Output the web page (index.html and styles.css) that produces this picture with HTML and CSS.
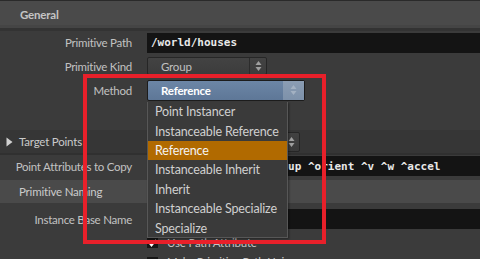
FILE: index.html
```html
<!DOCTYPE html>
<html>
<head>
<meta charset="utf-8">
<link rel="stylesheet" href="styles.css">
</head>
<body>
<div class="page">
  <div class="topline"></div>
  <div class="section general">General</div>
  <div class="section-sep"></div>

  <div class="row r-path">
    <div class="label">Primitive Path</div>
    <div class="field mono">/world/houses</div>
  </div>

  <div class="row r-kind">
    <div class="label">Primitive Kind</div>
    <div class="dropdown kind">
      <span class="dd-text">Group</span>
      <span class="dd-arrows"><svg width="7" height="12" viewBox="0 0 7 12"><path d="M3.5 1 L6.5 5 L0.5 5 Z M0.5 7 L6.5 7 L3.5 11 Z" fill="#a0a0a0"/></svg></span>
    </div>
  </div>

  <div class="row r-method">
    <div class="label">Method</div>
    <div class="dropdown method">
      <span class="dd-text">Reference</span>
      <span class="dd-arrows"><svg width="7" height="12" viewBox="0 0 7 12"><path d="M3.5 1 L6.5 5 L0.5 5 Z M0.5 7 L6.5 7 L3.5 11 Z" fill="#a3b1c2"/></svg></span>
    </div>
  </div>

  <div class="row r-blank"></div>

  <div class="row r-target">
    <div class="label-left"><svg class="tri" width="7" height="10" viewBox="0 0 7 10"><path d="M0.5 0.5 L6.5 5 L0.5 9.5 Z" fill="#d0d0d0"/></svg>Target Points</div>
    <div class="dropdown target">
      <span class="dd-text"></span>
      <span class="dd-arrows"><svg width="7" height="12" viewBox="0 0 7 12"><path d="M3.5 1 L6.5 5 L0.5 5 Z M0.5 7 L6.5 7 L3.5 11 Z" fill="#a0a0a0"/></svg></span>
    </div>
  </div>

  <div class="row r-attr">
    <div class="label">Point Attributes to Copy</div>
    <div class="field mono attr">* ^uv ^N ^Cd ^scale ^up ^orient ^v ^w ^accel</div>
  </div>

  <div class="section naming">Primitive Naming</div>

  <div class="row r-base">
    <div class="label">Instance Base Name</div>
    <div class="field mono"></div>
  </div>

  <div class="row r-check">
    <div class="label"></div>
    <div class="check-wrap"><span class="checkbox"><svg width="9" height="8" viewBox="0 0 9 8"><path d="M1 3.5 L3.5 6.5 L8 1" stroke="#ffffff" stroke-width="1.8" fill="none"/></svg></span><span class="check-label">Use Path Attribute</span></div>
  </div>

  <div class="row r-check2">
    <div class="label"></div>
    <div class="check-wrap"><span class="checkbox"></span><span class="check-label">Make Primitive Path Unique</span></div>
  </div>

  <div class="menu">
    <div class="item">Point Instancer</div>
    <div class="item">Instanceable Reference</div>
    <div class="item active">Reference</div>
    <div class="item">Instanceable Inherit</div>
    <div class="item">Inherit</div>
    <div class="item">Instanceable Specialize</div>
    <div class="item">Specialize</div>
  </div>

  <div class="highlight-box"></div>
</div>
</body>
</html>
```

FILE: styles.css
```css
* { box-sizing: border-box; }
html, body { margin: 0; padding: 0; }
body {
  width: 480px;
  height: 259px;
  overflow: hidden;
  background: #3b3b3b;
  font-family: "Lato", "Noto Sans", sans-serif;
  color: #c6c6c6;
}
.page {
  position: relative;
  width: 480px;
  height: 259px;
  overflow: hidden;
}
.topline { height: 1px; background: #2a2a2a; }
.section {
  background: #4a4a4a;
  font-size: 11.5px;
  letter-spacing: -0.2px;
  padding-left: 20px;
  display: flex;
  align-items: center;
}
.general {
  height: 27px;
  padding-top: 2px;
  font-weight: bold;
  color: #c4c4c4;
  border-bottom: 3px solid #454545;
}
.section-sep { height: 3px; background: #333333; }

.row {
  display: grid;
  grid-template-columns: 132px 1fr;
  column-gap: 15px;
  align-items: center;
}
.label {
  text-align: right;
  font-size: 11.5px;
  letter-spacing: -0.25px;
  color: #c2c2c2;
  white-space: nowrap;
}
.field {
  background: #141414;
  height: 20px;
  display: flex;
  align-items: center;
  padding-left: 4px;
  white-space: nowrap;
  overflow: hidden;
}
.field.attr { padding-left: 2px; }
.mono {
  font-family: "DejaVu Sans Mono", monospace;
  font-weight: bold;
  font-size: 11px;
  color: #e8e8e8;
}
.r-path { height: 22px; padding-top: 1px; }
.r-kind { height: 24px; padding-top: 2px; }
.r-method { height: 24px; padding-top: 2px; }
.r-blank { height: 29px; }

.dropdown {
  display: flex;
  align-items: stretch;
  border: 1px solid #262626;
  border-radius: 2px;
  font-size: 11.5px;
  letter-spacing: -0.2px;
}
.dd-text {
  flex: 1;
  display: flex;
  align-items: center;
  padding-left: 13px;
}
.dd-arrows {
  width: 17px;
  display: flex;
  align-items: center;
  justify-content: center;
  border-left: 1px solid #2c2c2c;
}
.kind {
  width: 120px;
  height: 18px;
  background: linear-gradient(#434343, #3c3c3c);
  color: #c0c0c0;
}
.method {
  width: 158px;
  height: 21px;
  background: linear-gradient(#6c86a6, #5e7797);
  border-color: #1c1c1c;
  color: #ffffff;
  font-weight: bold;
}
.method .dd-arrows {
  width: 21px;
  background: linear-gradient(#8b9db3, #7d91aa);
  border-left: none;
}
.r-target {
  height: 23px;
  background: #363636;
}
.label-left {
  display: flex;
  align-items: center;
  font-size: 11.5px;
  letter-spacing: -0.2px;
  color: #cacaca;
  padding-left: 6px;
  gap: 6px;
  white-space: nowrap;
}
.tri { display: block; }
.target {
  width: 153px;
  height: 20px;
  background: linear-gradient(#414141, #3a3a3a);
}
.r-attr {
  height: 26px;
  border-top: 2px solid #303030;
  padding-bottom: 2px;
}
.naming {
  height: 23px;
  font-weight: normal;
  color: #cbcbcb;
  margin-top: 1px;
  padding-left: 19px;
}
.r-base { height: 30px; padding-top: 2px; }
.r-check { height: 15px; padding-top: 3px; }
.r-check2 { height: 15px; padding-top: 7px; }
.check-wrap {
  display: flex;
  align-items: center;
  gap: 9px;
  font-size: 11.5px;
  letter-spacing: -0.2px;
  color: #c4c4c4;
}
.checkbox {
  width: 11px;
  height: 10px;
  background: #161616;
  display: flex;
  align-items: center;
  justify-content: center;
}

.menu {
  position: absolute;
  left: 147px;
  top: 102px;
  width: 141px;
  height: 136px;
  background: #3a3a3a;
  border: 1px solid #575757;
  border-top: none;
  box-shadow: 1px 1px 2px rgba(0,0,0,0.4);
}
.item {
  height: 19.4px;
  display: flex;
  align-items: center;
  padding-left: 7px;
  font-size: 12.5px;
  letter-spacing: -0.15px;
  color: #d0d0d0;
  white-space: nowrap;
}
.item.active {
  background: #b16a00;
  color: #f4f4f4;
}

.highlight-box {
  position: absolute;
  left: 83px;
  top: 74px;
  width: 243px;
  height: 170px;
  border: 4px solid #e8202a;
}
```
